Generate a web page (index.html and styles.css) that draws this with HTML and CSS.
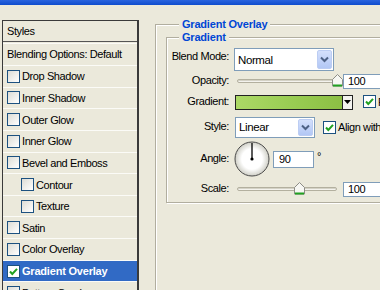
FILE: index.html
```html
<!DOCTYPE html>
<html lang="en">

<head>
    <meta charset="UTF-8">
    <meta name="viewport" content="width=device-width, initial-scale=1.0">
    <title>Layer Style - Gradient Overlay</title>
    <link rel="stylesheet" href="styles.css">
</head>

<body>
    <!-- Window title bar (only the bottom edge is visible) -->
    <div class="titlebar"></div>

    <div class="dialog">
        <!-- Effects list -->
        <div class="fx-list">
            <div class="fx-head">Styles</div>
            <div class="fx-head blend">Blending Options: Default</div>
            <div class="fx-item"><span class="chk"></span>Drop Shadow</div>
            <div class="fx-item"><span class="chk"></span>Inner Shadow</div>
            <div class="fx-item"><span class="chk"></span>Outer Glow</div>
            <div class="fx-item"><span class="chk"></span>Inner Glow</div>
            <div class="fx-item"><span class="chk"></span>Bevel and Emboss</div>
            <div class="fx-item sub"><span class="chk"></span>Contour</div>
            <div class="fx-item sub"><span class="chk"></span>Texture</div>
            <div class="fx-item"><span class="chk"></span>Satin</div>
            <div class="fx-item"><span class="chk"></span>Color Overlay</div>
            <div class="fx-item active">
                <span class="chk on"><svg width="11" height="11" viewBox="0 0 11 11"><path d="M2 5.5 L4.3 8 L9 2.8" fill="none" stroke="#21a121" stroke-width="2"/></svg></span>Gradient Overlay
            </div>
            <div class="fx-item"><span class="chk"></span>Pattern Overlay</div>
        </div>

        <!-- Settings -->
        <fieldset class="group outer">
            <legend>Gradient Overlay</legend>
            <fieldset class="group inner">
                <legend>Gradient</legend>

                <div class="row r-blend">
                    <span class="lbl up-more">Blend Mode:</span>
                    <div class="select blend-mode">
                        <span class="value">Normal</span>
                        <span class="drop"><svg width="9" height="7" viewBox="0 0 9 7"><path d="M1 1.5 L4.5 5 L8 1.5" fill="none" stroke="#4d6185" stroke-width="2"/></svg></span>
                    </div>
                </div>

                <div class="row r-opacity">
                    <span class="lbl">Opacity:</span>
                    <div class="slider">
                        <div class="track"></div>
                        <svg class="thumb" style="left: 100%" width="11" height="13" viewBox="0 0 11 13"><path d="M0.5 5.5 L5.5 0.5 L10.5 5.5 L10.5 12 L0.5 12 Z" fill="#f7f7f3" stroke="#8c8c86"/><path d="M1 11.5 L10 11.5" stroke="#21a121" stroke-width="2"/></svg>
                    </div>
                    <div class="num">100</div>
                </div>

                <div class="row r-gradient">
                    <span class="lbl">Gradient:</span>
                    <div class="gradient-pick">
                        <div class="swatch"></div>
                        <div class="arrow"><svg width="7" height="4" viewBox="0 0 7 4"><path d="M0 0 L7 0 L3.5 4 Z" fill="#000"/></svg></div>
                    </div>
                    <span class="chk on reverse"><svg width="11" height="11" viewBox="0 0 11 11"><path d="M2 5.5 L4.3 8 L9 2.8" fill="none" stroke="#21a121" stroke-width="2"/></svg></span>
                    <span class="opt">Reverse</span>
                </div>

                <div class="row r-style">
                    <span class="lbl">Style:</span>
                    <div class="select style-mode">
                        <span class="value">Linear</span>
                        <span class="drop"><svg width="9" height="7" viewBox="0 0 9 7"><path d="M1 1.5 L4.5 5 L8 1.5" fill="none" stroke="#4d6185" stroke-width="2"/></svg></span>
                    </div>
                    <span class="chk on align"><svg width="11" height="11" viewBox="0 0 11 11"><path d="M2 5.5 L4.3 8 L9 2.8" fill="none" stroke="#21a121" stroke-width="2"/></svg></span>
                    <span class="opt">Align with Layer</span>
                </div>

                <div class="row r-angle">
                    <span class="lbl">Angle:</span>
                    <svg class="dial" width="36" height="36" viewBox="0 0 36 36">
                        <defs>
                            <radialGradient id="dialFill" cx="50%" cy="50%" r="50%">
                                <stop offset="0.6" stop-color="#ffffff"/>
                                <stop offset="1" stop-color="#cfcfc6"/>
                            </radialGradient>
                        </defs>
                        <circle cx="18" cy="18" r="17" fill="url(#dialFill)" stroke="#4a4a4a"/>
                        <path d="M18 18 L18 2" stroke="#000" stroke-width="1.3"/>
                        <circle cx="18" cy="18" r="1.6" fill="#000"/>
                    </svg>
                    <div class="num angle">90</div>
                    <span class="deg">°</span>
                </div>

                <div class="row r-scale">
                    <span class="lbl">Scale:</span>
                    <div class="slider">
                        <div class="track"></div>
                        <svg class="thumb" style="left: 62%" width="11" height="13" viewBox="0 0 11 13"><path d="M0.5 5.5 L5.5 0.5 L10.5 5.5 L10.5 12 L0.5 12 Z" fill="#f7f7f3" stroke="#8c8c86"/><path d="M1 11.5 L10 11.5" stroke="#21a121" stroke-width="2"/></svg>
                    </div>
                    <div class="num">100</div>
                </div>
            </fieldset>
        </fieldset>
    </div>
</body>

</html>
```

FILE: styles.css
```css
body {
    margin: 0;
    width: 380px;
    height: 290px;
    overflow: hidden;
    background-color: #ebe9db;
    font-family: 'Liberation Sans', Arial, sans-serif;
    font-size: 11px;
    letter-spacing: -0.4px;
    color: #000;
}

.titlebar {
    height: 5px;
    background: linear-gradient(#2a64de, #0f4ccd);
}

.dialog {
    display: flex;
    align-items: flex-start;
    height: 285px;
    overflow: hidden;
}

/* Effects list on the left */
.fx-list {
    flex-shrink: 0;
    margin: 15px 0 0 2px;
    width: 134px;
    border: 1px solid #3a3a3a;
    border-right-width: 2px;
    border-bottom: none;
}

.fx-head {
    height: 20px;
    line-height: 20px;
    padding-left: 4px;
    border-bottom: 1px solid #555;
}

.fx-head.blend {
    height: 21px;
    line-height: 21px;
    border-top: 1px solid #fbfbf7;
    margin-top: 1px;
    border-bottom: none;
}

.fx-item {
    display: flex;
    align-items: center;
    height: 20.65px;
    padding-left: 4px;
    border-top: 1px solid #fbfbf7;
}

.fx-item.sub {
    padding-left: 18px;
}

.fx-item.active {
    background-color: #316ac5;
    color: #fff;
    font-weight: bold;
    letter-spacing: -0.2px;
}

/* XP style checkbox */
.chk {
    display: inline-flex;
    align-items: center;
    justify-content: center;
    box-sizing: border-box;
    width: 13px;
    height: 13px;
    margin-right: 2px;
    border: 1px solid #1c5180;
    background: linear-gradient(135deg, #dcdcd5, #ffffff);
    flex-shrink: 0;
}

.chk.on {
    background: #fff;
}

/* Group boxes */
.group {
    margin: 0;
    padding: 0;
    border: 1px solid #b1ae9f;
    box-shadow: inset 1px 1px 0 #fff, 1px 1px 0 #fff;
    min-width: 0;
}

.group legend {
    padding: 0 3px;
    line-height: 13px;
    font-weight: bold;
    color: #0046d5;
    letter-spacing: -0.2px;
    background-color: #ebe9db;
}

.group.outer {
    flex-shrink: 0;
    margin: 13px 0 0 16px;
    padding-left: 10px;
    width: 260px;
    height: 300px;
}

.group.outer legend {
    margin-left: 13px;
}

.group.inner {
    width: 260px;
    padding: 3px 0 2px 0;
}

.group.inner legend {
    margin-left: 12px;
}

/* Form rows */
.row {
    display: flex;
    align-items: center;
    white-space: nowrap;
}

.row > * {
    flex-shrink: 0;
}

.r-blend { height: 25px; }
.r-opacity { height: 18px; }
.r-gradient { height: 24px; }
.r-style { height: 26px; }
.r-angle { height: 38px; }
.r-scale { height: 22px; }

.lbl {
    width: 62px;
    text-align: right;
    margin-right: 5px;
    margin-bottom: 3px;
}

.lbl.up-more {
    margin-bottom: 8px;
}

/* Drop down lists */
.select {
    display: flex;
    align-items: center;
    box-sizing: border-box;
    border: 1px solid #7f9db9;
    background-color: #fff;
    padding: 1px;
}

.select .value {
    flex: 1;
    padding-left: 2px;
    font-size: 11.5px;
}

.select .drop {
    display: flex;
    align-items: center;
    justify-content: center;
    box-sizing: border-box;
    width: 15px;
    height: 100%;
    border: 1px solid #bccdf3;
    border-radius: 2px;
    background: linear-gradient(#d4e0fc, #b2c7f5);
}

.select.blend-mode {
    width: 100px;
    height: 23px;
}

.select.style-mode {
    width: 80px;
    height: 21px;
    margin-left: 1px;
}

/* Sliders */
.slider {
    position: relative;
    width: 100px;
    height: 14px;
    margin-left: 3px;
    display: flex;
    align-items: center;
}

.slider .track {
    width: 100px;
    height: 2px;
    border: 1px solid #b3b09f;
    border-radius: 2px;
    background-color: #f4f3ee;
    box-shadow: inset 0 1px 0 #d4d2c6;
}

.slider .thumb {
    position: absolute;
    top: 0;
    margin-left: -5px;
}

/* Number fields */
.num {
    box-sizing: border-box;
    width: 45px;
    height: 15px;
    line-height: 13px;
    padding-left: 4px;
    margin-left: 6px;
    border: 1px solid #7f9db9;
    background-color: #fff;
}

.num.angle {
    width: 41px;
    height: 17px;
    line-height: 15px;
    padding-left: 5px;
    margin-left: 3px;
}

.deg {
    margin-left: 3px;
    margin-bottom: 6px;
}

/* Gradient picker */
.gradient-pick {
    display: flex;
    box-sizing: border-box;
    width: 118px;
    height: 15px;
    margin-left: 1px;
    border: 1px solid #222;
}

.gradient-pick .swatch {
    flex: 1;
    background: linear-gradient(to right, #acd966, #98cc52 55%, #8cbf44);
    border-right: 1px solid #222;
}

.gradient-pick .arrow {
    width: 9px;
    display: flex;
    align-items: center;
    justify-content: center;
    background-color: #f3f3ee;
}

.chk.reverse {
    margin-left: 10px;
    margin-bottom: 2px;
}

.chk.align {
    margin-left: 8px;
}

.opt {
    margin-left: 0;
}
```
